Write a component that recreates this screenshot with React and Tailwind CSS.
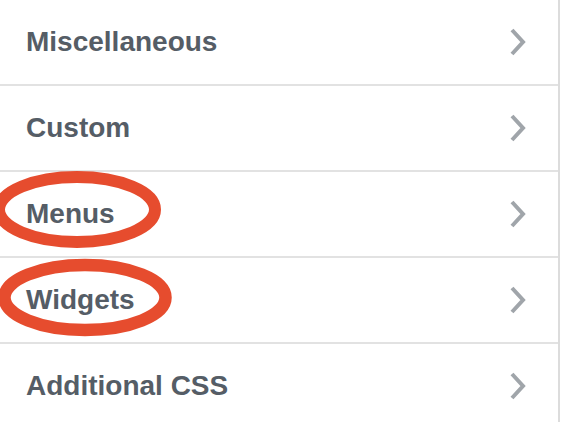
const SECTIONS = ["Miscellaneous", "Custom", "Menus", "Widgets", "Additional CSS"];

function Chevron() {
  return (
    <svg width="18" height="28" viewBox="0 0 18 28" aria-hidden className="shrink-0">
      <polyline
        points="3,2 14,14 3,26"
        fill="none"
        stroke="#a0a5aa"
        strokeWidth="4"
        strokeLinejoin="miter"
      />
    </svg>
  );
}

/**
 * Customizer panel list with red hand-drawn markers over two items.
 */
export default function App() {
  return (
    <div className="relative h-[422px] w-[562px] overflow-hidden bg-white font-['Liberation_Sans',Arial,sans-serif]">
      <ul className="w-[560px] border-r-2 border-[#dcdcdc]">
        {SECTIONS.map((title) => (
          <li
            key={title}
            className="flex h-[86px] items-center justify-between border-b-2 border-[#e2e2e2] pl-[26px] pr-[31px]"
          >
            <span className="text-[28px] font-bold text-[#555d66]">{title}</span>
            <Chevron />
          </li>
        ))}
      </ul>
      <svg
        className="pointer-events-none absolute left-0 top-0"
        width="562"
        height="422"
        aria-hidden
      >
        <ellipse cx="77" cy="209.5" rx="78" ry="32.5" fill="none" stroke="#e64c2e" strokeWidth="12" />
        <ellipse cx="85" cy="297.5" rx="80.5" ry="32.5" fill="none" stroke="#e64c2e" strokeWidth="12.5" />
      </svg>
    </div>
  );
}
